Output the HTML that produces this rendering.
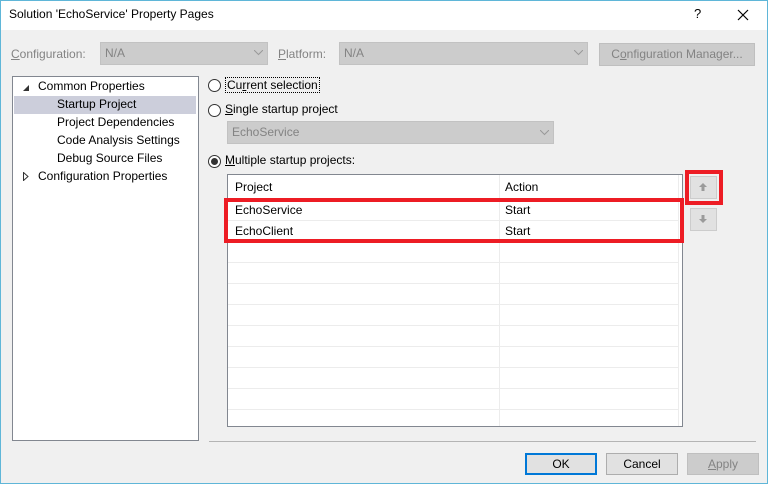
<html><head><style>
body{margin:0;width:768px;height:484px;overflow:hidden;background:#f0f0f0;font-family:"Segoe UI","Liberation Sans",sans-serif;font-size:12px;color:#000;position:relative}
.a{position:absolute}
.combo{background:#cccccc;border:1px solid #c2c2c2;color:#838383;box-sizing:border-box;padding:3px 4px}
.dis{color:#838383}
.radio{width:11px;height:11px;border:1px solid #333;border-radius:50%;background:#fff}
.row{position:absolute;left:0;width:450px;height:20px;border-bottom:1px solid #ececec}
.btn{box-sizing:border-box;border:1px solid #adadad;background:#e1e1e1;text-align:center;line-height:20px}
</style></head><body>
<div class="a" style="left:0;top:0;width:768px;height:30px;background:#fff"></div>
<div class="a" style="left:9px;top:7px">Solution 'EchoService' Property Pages</div>
<div class="a" style="left:694px;top:6px;font-size:13px">?</div>
<svg class="a" style="left:737px;top:9px" width="12" height="12"><path d="M1 1L11 11M11 1L1 11" stroke="#000" stroke-width="1.2"/></svg>

<div class="a dis" style="left:11px;top:47px"><u>C</u>onfiguration:</div>
<div class="a combo" style="left:100px;top:42px;width:168px;height:23px">N/A</div>
<div class="a dis" style="left:278px;top:47px"><u>P</u>latform:</div>
<div class="a combo" style="left:339px;top:42px;width:249px;height:23px">N/A</div>
<svg class="a" style="left:254px;top:50px" width="9" height="6"><path d="M0 0L4.5 4.5L9 0" stroke="#999" fill="none"/></svg>
<svg class="a" style="left:574px;top:50px" width="9" height="6"><path d="M0 0L4.5 4.5L9 0" stroke="#999" fill="none"/></svg>
<div class="a btn dis" style="left:599px;top:43px;width:156px;height:23px;background:#cccccc;border-color:#bfbfbf">C<u>o</u>nfiguration Manager...</div>

<div class="a" style="left:12px;top:76px;width:185px;height:363px;border:1px solid #828790;background:#fff"></div>
<div class="a" style="left:14px;top:96px;width:182px;height:18px;background:#cccedb"></div>
<svg class="a" style="left:22px;top:84px" width="8" height="8"><path d="M1 7L7 7L7 1Z" fill="#333"/></svg>
<div class="a" style="left:38px;top:79px">Common Properties</div>
<div class="a" style="left:57px;top:97px">Startup Project</div>
<div class="a" style="left:57px;top:115px">Project Dependencies</div>
<div class="a" style="left:57px;top:133px">Code Analysis Settings</div>
<div class="a" style="left:57px;top:151px">Debug Source Files</div>
<svg class="a" style="left:23px;top:172px" width="6" height="9"><path d="M0.5 0.5L5 4.5L0.5 8.5Z" fill="none" stroke="#333"/></svg>
<div class="a" style="left:38px;top:169px">Configuration Properties</div>

<div class="a radio" style="left:208px;top:79px"></div>
<div class="a" style="left:225px;top:77px;border:1px dotted #000;padding:0 1px">Cu<u>r</u>rent selection</div>
<div class="a radio" style="left:208px;top:104px"></div>
<div class="a" style="left:225px;top:102px"><u>S</u>ingle startup project</div>
<div class="a combo" style="left:227px;top:121px;width:327px;height:23px">EchoService</div>
<svg class="a" style="left:540px;top:130px" width="9" height="6"><path d="M0 0L4.5 4.5L9 0" stroke="#999" fill="none"/></svg>
<div class="a radio" style="left:208px;top:155px"></div>
<div class="a" style="left:211px;top:158px;width:7px;height:7px;border-radius:50%;background:#333"></div>
<div class="a" style="left:225px;top:153px"><u>M</u>ultiple startup projects:</div>

<div class="a" style="left:227px;top:174px;width:454px;height:251px;border:1px solid #828790;background:#fff;overflow:hidden">
<div class="a" style="left:271px;top:0;width:1px;height:260px;background:#ececec"></div>
<div class="a" style="left:450px;top:0;width:1px;height:260px;background:#ececec"></div>
<div class="row" style="top:0;height:24px;border-bottom:1px solid #e5e5e5"></div>
<div class="a" style="left:7px;top:5px">Project</div><div class="a" style="left:277px;top:5px">Action</div>
<div class="row" style="top:25px"></div><div class="row" style="top:46px"></div><div class="row" style="top:67px"></div><div class="row" style="top:88px"></div><div class="row" style="top:109px"></div><div class="row" style="top:130px"></div><div class="row" style="top:151px"></div><div class="row" style="top:172px"></div><div class="row" style="top:193px"></div><div class="row" style="top:214px"></div>
<div class="a" style="left:7px;top:28px">EchoService</div><div class="a" style="left:277px;top:28px">Start</div>
<div class="a" style="left:7px;top:49px">EchoClient</div><div class="a" style="left:277px;top:49px">Start</div>
</div>
<div class="a" style="left:224px;top:198px;width:452px;height:37px;border:4px solid #ed1c24"></div>

<div class="a btn" style="left:690px;top:176px;width:27px;height:23px;border-color:#ccc;background:#e1e1e1"></div>
<svg class="a" style="left:698px;top:182px" width="10" height="10"><path d="M5 1L9 5H6.5V9H3.5V5H1Z" fill="#9a9a9a"/></svg>
<div class="a" style="left:685px;top:170px;width:30px;height:27px;border:4px solid #ed1c24"></div>
<div class="a btn" style="left:690px;top:208px;width:27px;height:23px;border-color:#ccc;background:#e1e1e1"></div>
<svg class="a" style="left:698px;top:214px" width="10" height="10"><path d="M5 9L9 5H6.5V1H3.5V5H1Z" fill="#9a9a9a"/></svg>

<div class="a" style="left:209px;top:441px;width:547px;height:1px;background:#b4b4b4"></div>
<div class="a btn" style="left:525px;top:453px;width:72px;height:22px;border:2px solid #0078d7;line-height:18px">OK</div>
<div class="a btn" style="left:606px;top:453px;width:72px;height:22px">Cancel</div>
<div class="a btn dis" style="left:687px;top:453px;width:72px;height:22px;background:#cccccc;border-color:#bfbfbf"><u>A</u>pply</div>
<div class="a" style="left:0;top:0;width:766px;height:482px;border:1px solid #5fb6d8"></div>
</body></html>
